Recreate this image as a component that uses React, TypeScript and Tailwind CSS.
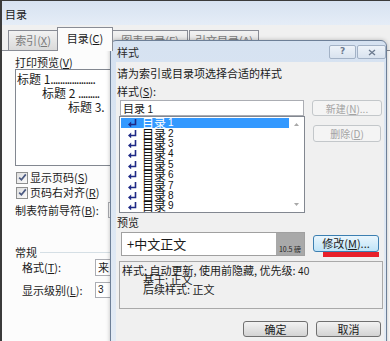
const levels = [1, 2, 3, 4, 5, 6, 7, 8, 9];

function ReturnArrow() {
  return (
    <svg width="9" height="8" viewBox="0 0 9 8" className="shrink-0 text-[#1f2a86]">
      <path d="M7.5 0 V5.5 H2.5" stroke="currentColor" strokeWidth="1.6" fill="none" />
      <path d="M0 5.5 L3.2 2.6 V8.4 Z" fill="currentColor" />
    </svg>
  );
}

function CheckBox() {
  return (
    <span className="flex h-[12px] w-[12px] shrink-0 items-center justify-center border border-[#8e8f8f] bg-gradient-to-br from-[#dedede] to-[#fbfbfb]">
      <svg width="9" height="9" viewBox="0 0 9 9">
        <path d="M1.2 4.6 L3.4 6.8 L7.8 1.4" stroke="#4b5a82" strokeWidth="1.7" fill="none" />
      </svg>
    </span>
  );
}

function Tab({ label, k, active, w }: { label: string; k: string; active?: boolean; w: string }) {
  if (active) {
    return (
      <div className={`relative z-10 -mx-[1px] -mb-[1px] flex h-[24px] items-center justify-center border border-b-0 border-[#898c95] bg-[#fcfcfc] pb-[2px] text-[#1b1b1b] ${w}`}>
        {label}(<u>{k}</u>)
      </div>
    );
  }
  return (
    <div className={`flex h-[20px] items-center justify-center border border-b-0 border-[#898c95] bg-gradient-to-b from-[#f2f2f2] to-[#dadada] text-[#7a7a7a] ${w}`}>
      {label}(<u>{k}</u>)
    </div>
  );
}

export default function App() {
  return (
    <div className="relative h-[341px] w-[390px] overflow-hidden bg-white font-['Noto_Sans_CJK_SC',sans-serif] text-[11px] text-[#1b1b1b]">
      {/* 目录 dialog in the back */}
      <div className="flex h-full flex-col border-l-2 border-t border-[#3b3b3b] bg-[#f0f0f0]">
        <div className="h-[24px] shrink-0 bg-gradient-to-b from-[#d7e2f1] to-[#e5edf7] pl-[3px] pt-[7px] leading-[12px] text-[#202020]">
          目录
        </div>
        <div className="flex h-[25px] shrink-0 items-end pl-[6px]">
          <Tab label="索引" k="X" w="w-[50px]" />
          <Tab label="目录" k="C" w="w-[56px]" active />
          <Tab label="图表目录" k="F" w="w-[76px]" />
          <div className="w-[1px]" />
          <Tab label="引文目录" k="A" w="w-[70px]" />
        </div>
        <div className="flex flex-1 flex-col border-t border-[#898c95] bg-[#fcfcfc] pl-[13px]">
          <p className="mt-[5px] h-[12px] leading-[12px]">
            打印预览(<u>V</u>)
          </p>
          <div className="mt-[1px] h-[97px] w-[100px] overflow-hidden border border-r-0 border-[#828790] bg-white pt-[2px] text-[12px] leading-[14px]">
            <p className="whitespace-nowrap pl-[1px]">
              标题 1<span className="tracking-[-1px]">...................</span>
            </p>
            <p className="whitespace-nowrap pl-[26px]">
              标题 2 <span className="tracking-[-1px]">.........</span>
            </p>
            <p className="whitespace-nowrap pl-[52px]">标题 3.</p>
          </div>
          <div className="mt-[4px] flex h-[15px] items-center gap-[2px] pl-[1px]">
            <CheckBox />
            <span>显示页码(<u>S</u>)</span>
          </div>
          <div className="flex h-[15px] items-center gap-[2px] pl-[1px]">
            <CheckBox />
            <span>页码右对齐(<u>R</u>)</span>
          </div>
          <div className="mt-[2px] flex h-[16px] items-center">
            <span className="w-[93px] shrink-0">制表符前导符(<u>B</u>):</span>
            <div className="h-[16px] w-[60px] border border-[#abadb3] bg-white" />
          </div>
          <div className="mt-[28px] flex h-[12px] items-center">
            <span className="leading-[12px]">常规</span>
            <div className="ml-[3px] h-0 w-[90px] border-t border-[#d5dfe5]" />
          </div>
          <div className="mt-[1px] flex h-[17px] items-center pl-[7px]">
            <span className="w-[73px] shrink-0">格式(<u>T</u>):</span>
            <div className="h-[17px] w-[60px] overflow-hidden border border-[#abadb3] bg-white pl-[2px] leading-[15px]">来</div>
          </div>
          <div className="mt-[6px] flex h-[16px] items-center pl-[7px]">
            <span className="w-[73px] shrink-0">显示级别(<u>L</u>):</span>
            <div className="h-[16px] w-[60px] border border-[#abadb3] bg-white pl-[2px] font-['Liberation_Sans',sans-serif] text-[10px] leading-[14px]">
              3
            </div>
          </div>
        </div>
      </div>

      {/* 样式 dialog on top */}
      <div className="absolute left-[110px] top-[40px] flex h-[320px] w-[277px] flex-col rounded-t-[6px] border border-[#6d7f97] bg-gradient-to-b from-[#d6e2f1] to-[#e3ebf5] shadow-[0_0_4px_rgba(0,0,0,0.25)]">
        <div className="flex h-[21px] shrink-0 items-start justify-between pl-[6px] pt-[4px]">
          <span className="mt-[1px] leading-[12px] text-[#2a2a2a]">样式</span>
          <div className="flex gap-[1px]">
            <div className="flex h-[14px] w-[27px] items-center justify-center rounded-[2px] border border-[#a3b2c6] bg-gradient-to-b from-[#eef3f9] to-[#d9e3ef] font-['DejaVu_Sans',sans-serif] text-[9px] font-bold text-[#6b7a8e]">
              ?
            </div>
            <div className="flex h-[14px] w-[29px] items-center justify-center rounded-[2px] border border-[#a3b2c6] bg-gradient-to-b from-[#eef3f9] to-[#d9e3ef]">
              <svg width="8" height="7" viewBox="0 0 8 7">
                <path d="M1 1 L7 6 M7 1 L1 6" stroke="#6b7a8e" strokeWidth="1.3" fill="none" />
              </svg>
            </div>
          </div>
        </div>
        <div className="ml-[5px] mr-[2px] flex flex-1 flex-col bg-[#f0f0f0] pl-[3px] pr-[1px]">
          <p className="-ml-[2px] mt-[5px] h-[12px] leading-[12px]">请为索引或目录项选择合适的样式</p>
          <p className="-ml-[2px] mt-[6px] h-[12px] leading-[12px]">
            样式(<u>S</u>):
          </p>
          <div className="mt-[3px] flex gap-[7px]">
            <div className="w-[186px]">
              <div className="ml-[1px] h-[16px] w-[184px] border border-[#abadb3] bg-white pl-[2px] leading-[14px]">
                目录 <span className="font-['Liberation_Sans',sans-serif] text-[10px]">1</span>
              </div>
              <div className="relative h-[97px] border border-[#828790] bg-white p-[1px]">
                {levels.map((n) => (
                  <div
                    key={n}
                    className={`flex h-[10.4px] w-[168px] items-center pl-[7px] ${n === 1 ? 'bg-[#3399ff] text-white' : 'text-[#111]'}`}
                  >
                    <ReturnArrow />
                    <span className="ml-[5px] text-[12px] leading-[10px]">目录</span>
                    <span className="ml-[2px] font-['Liberation_Sans',sans-serif] text-[10px] leading-[10px]">{n}</span>
                  </div>
                ))}
                <div className="absolute bottom-[1px] right-[1px] top-[1px] flex w-[14px] flex-col items-center justify-between py-[5px]">
                  <svg width="5" height="3" viewBox="0 0 5 3">
                    <path d="M0 3 L2.5 0 L5 3 Z" fill="#a8a8a8" />
                  </svg>
                  <svg width="5" height="3" viewBox="0 0 5 3">
                    <path d="M0 0 L2.5 3 L5 0 Z" fill="#a8a8a8" />
                  </svg>
                </div>
              </div>
            </div>
            <div className="flex w-[70px] flex-col">
              <div className="flex h-[16px] items-center justify-center rounded-[3px] border border-[#c3c7ca] bg-[#f4f4f4] text-[10px] text-[#a3a3a3]">
                新建(<u>N</u>)...
              </div>
              <div className="ml-[1px] mt-[9px] flex h-[17px] w-[68px] items-center justify-center rounded-[3px] border border-[#c3c7ca] bg-[#f4f4f4] text-[10px] text-[#a3a3a3]">
                删除(<u>D</u>)
              </div>
            </div>
          </div>
          <p className="-ml-[2px] mt-[3px] h-[12px] leading-[12px]">预览</p>
          <div className="mt-[4px] flex gap-[8px]">
            <div className="ml-[2px] flex h-[24px] w-[184px] border border-[#a0a0a0] bg-white">
              <span className="flex-1 pl-[5px] text-[13px] leading-[22px]">+中文正文</span>
              <span className="flex w-[28px] items-end justify-center bg-[#a9a9a9] pb-[2px] text-[7px] leading-[8px] text-[#222]">
                10.5 磅
              </span>
            </div>
            <div className="flex flex-col pt-[3px]">
              <div className="flex h-[17px] w-[66px] items-center justify-center rounded-[3px] border border-[#3c7fb1] bg-gradient-to-b from-[#eaf6fd] to-[#bfe4f8] text-[#1b1b1b]">
                修改(<u>M</u>)...
              </div>
              <div className="ml-[10px] h-[5px] w-[56px] bg-[#e8202a]" />
            </div>
          </div>
          <div className="mt-[4px] h-[48px] w-[264px] border border-[#a9a9a9] pl-[2px] pt-[3px]">
            <p className="h-[10px] whitespace-nowrap leading-[10px]">
              样式: 自动更新, 使用前隐藏, 优先级: <span className="font-['Liberation_Sans',sans-serif] text-[10px]">40</span>
            </p>
            <p className="h-[9px] whitespace-nowrap pl-[21px] leading-[9px]">基于: 正文</p>
            <p className="h-[10px] whitespace-nowrap pl-[21px] leading-[10px]">后续样式: 正文</p>
          </div>
          <div className="mt-[12px] flex justify-end gap-[8px] pr-[2px]">
            <div className="flex h-[16px] w-[65px] items-center justify-center rounded-[3px] border border-[#707070] bg-gradient-to-b from-[#f3f3f3] to-[#d3d3d3]">
              确定
            </div>
            <div className="flex h-[16px] w-[65px] items-center justify-center rounded-[3px] border border-[#707070] bg-gradient-to-b from-[#f3f3f3] to-[#d3d3d3]">
              取消
            </div>
          </div>
        </div>
      </div>
    </div>
  );
}
